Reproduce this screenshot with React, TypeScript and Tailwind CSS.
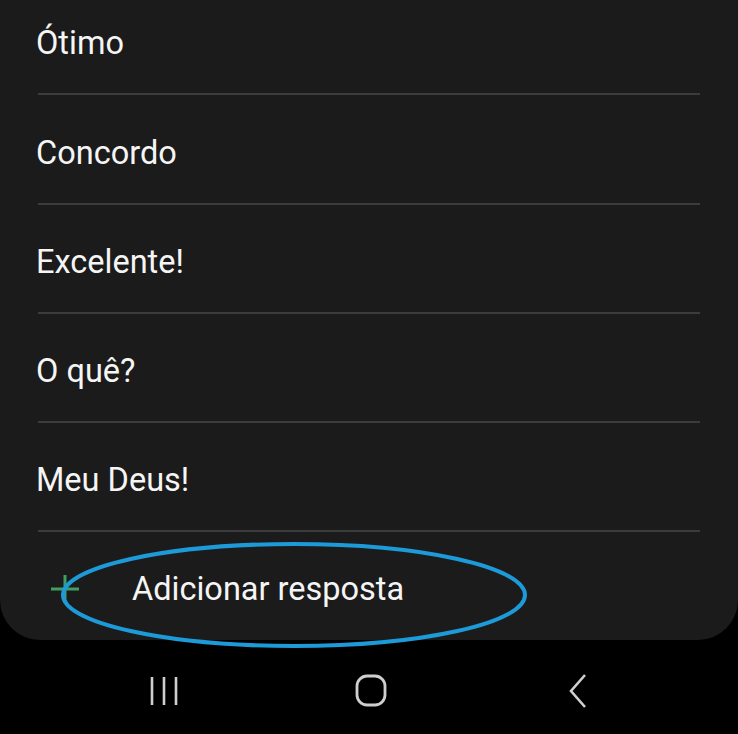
const replies = ["Ótimo", "Concordo", "Excelente!", "O quê?", "Meu Deus!"];

function NavBar() {
  return (
    <div className="flex h-[94px] items-center justify-center bg-black pt-[8px] pl-[4px]">
      <div className="flex items-center gap-[147px]">
        <div className="flex w-[60px] justify-center">
          <svg width="32" height="32" viewBox="0 0 32 32" className="text-[#cfcfcf]">
            <path d="M4 2v28M16 2v28M28 2v28" stroke="currentColor" strokeWidth="2.6" />
          </svg>
        </div>
        <div className="flex w-[60px] justify-center">
          <svg width="34" height="34" viewBox="0 0 34 34" className="text-[#cfcfcf]">
            <rect x="3" y="2" width="28" height="29" rx="10" fill="none" stroke="currentColor" strokeWidth="2.8" />
          </svg>
        </div>
        <div className="flex w-[60px] justify-center">
          <svg width="34" height="34" viewBox="0 0 34 34" className="text-[#cfcfcf]">
            <path d="M24 1L10 17l14 16" fill="none" stroke="currentColor" strokeWidth="2.6" />
          </svg>
        </div>
      </div>
    </div>
  );
}

export default function App() {
  return (
    <div className="h-[734px] w-[738px] overflow-hidden bg-black font-['Roboto',sans-serif]">
      <section className="relative h-[640px] overflow-hidden rounded-b-[40px] bg-[#1b1b1b]">
        <ul className="-mt-[14px]">
          {replies.map((r) => (
            <li key={r}>
              <div className="flex h-[107.3px] items-center pl-[36px] pt-[8px] text-[32.5px] text-[#f5f5f5]">{r}</div>
              <div className="ml-[38px] mr-[38px] h-[2px] bg-[#3c3c3c]" />
            </li>
          ))}
          <li className="flex h-[108px] items-center pt-[6px] text-[32.5px] text-[#f5f5f5]">
            <svg width="32" height="32" viewBox="0 0 32 32" className="ml-[49px] text-[#3f9f62]">
              <path d="M16 2v28M2 16h28" stroke="currentColor" strokeWidth="3" />
            </svg>
            <span className="ml-[51px]">Adicionar resposta</span>
          </li>
        </ul>
      </section>
      <svg
        className="pointer-events-none absolute left-0 top-0"
        width="738"
        height="734"
        viewBox="0 0 738 734"
      >
        <ellipse cx="294" cy="595" rx="231" ry="51" fill="none" stroke="#1d9ad8" strokeWidth="4" />
      </svg>
      <NavBar />
    </div>
  );
}
